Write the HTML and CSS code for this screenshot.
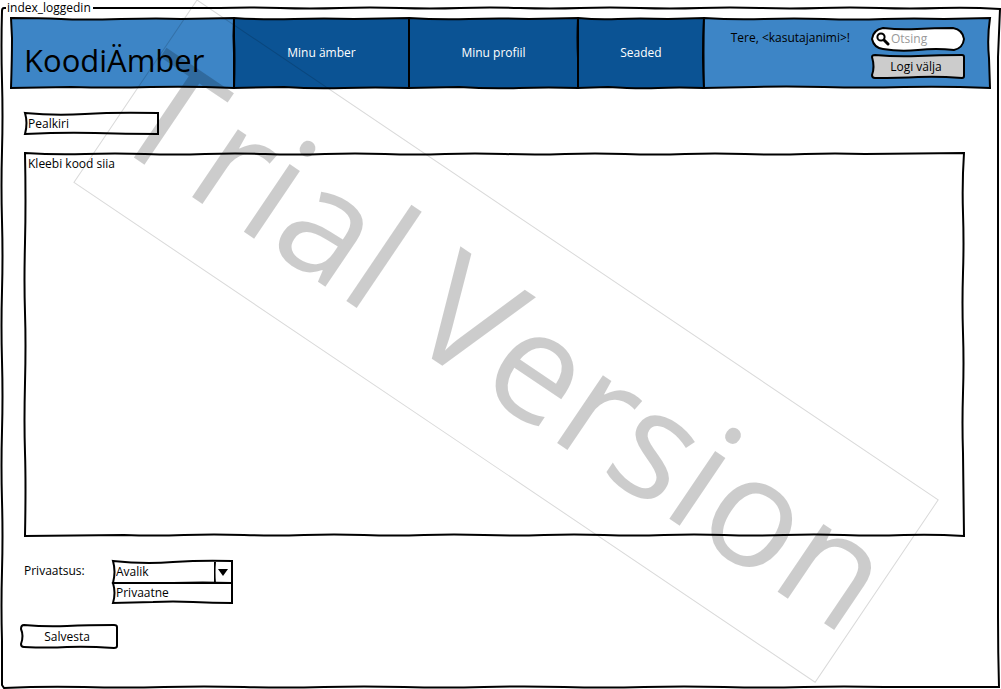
FILE: index.html
```html
<!DOCTYPE html>
<html lang="et">
<head>
<meta charset="utf-8">
<meta name="viewport" content="width=device-width, initial-scale=1">
<title>KoodiÄmber</title>
<link rel="stylesheet" href="styles.css">
</head>
<body>
<div class="frame">
  <svg class="sketch" viewBox="0 0 1001 689" preserveAspectRatio="none" aria-hidden="true"><path d="M6 8H4Q2 8 2 11q-1 35 0 70t0 70t0 70t0 70t0 70t0 70t0 70t0 70t0 70L2 685L4 688q40 -2 80 -1t80 0t80 0t80 0t80 0t80 0t80 0t80 0t80 0t80 0t80 0L999 687q-1 -35 -1 -70t0 -70t0 -70t0 -70t0 -70t0 -70t0 -70t0 -70t0 -70L1000 9q-30 -2 -60 -1t-60 0t-60 0t-60 0t-60 0t-60 0t-60 0t-60 0t-60 0t-60 0t-60 0t-60 0t-60 0L93 8"/></svg>
  <div class="frame-title">index_loggedin</div>

  <header class="header">
    <div class="cell brand">
      <svg class="sketch light" viewBox="0 0 223 70" preserveAspectRatio="none" aria-hidden="true"><path d="M0 0Q30 0 50 1T110 1T170 1L223 0Q222 18 223 35L223 70Q180 68 140 69T60 69L0 70Q1 40 1 20Z"/></svg>
      <h1 class="logo">KoodiÄmber</h1>
    </div>
    <nav class="nav">
      <a class="cell nav-link" href="#">
        <svg class="sketch dark" viewBox="0 0 175 70" preserveAspectRatio="none" aria-hidden="true"><path d="M0 0Q30 2 60 1T120 1L175 0V70Q140 69 110 70T50 69L0 70Q1 40 0 20Z"/></svg>
        <span>Minu ämber</span></a>
      <a class="cell nav-link" href="#">
        <svg class="sketch dark" viewBox="0 0 169 70" preserveAspectRatio="none" aria-hidden="true"><path d="M0 0Q30 2 60 1T120 1L169 0Q168 20 169 40V70Q140 69 110 70T50 69L0 70Z"/></svg>
        <span>Minu profiil</span></a>
      <a class="cell nav-link" href="#">
        <svg class="sketch dark" viewBox="0 0 126 70" preserveAspectRatio="none" aria-hidden="true"><path d="M0 0Q20 2 40 1T90 1L126 0Q125 20 125 40L126 70Q100 69 80 70T30 69L0 70Z"/></svg>
        <span>Seaded</span></a>
    </nav>
    <div class="cell account">
      <svg class="sketch light" viewBox="0 0 286 70" preserveAspectRatio="none" aria-hidden="true"><path d="M0 0Q30 2 60 1T120 1T180 1T240 1L286 0Q283 20 285 40L286 70Q240 68 200 69T120 69T50 69L0 70Q-1 35 0 0Z"/></svg>
      <p class="greeting">Tere, &lt;kasutajanimi&gt;!</p>
      <div class="account-tools">
        <label class="search">
          <svg class="sketch white" viewBox="0 0 92 22" preserveAspectRatio="none" aria-hidden="true"><path d="M11 0Q28 2 45 1T81 0Q91 2 92 11Q91 20 82 22Q64 20 46 22T11 21Q2 20 0 11Q1 2 11 0Z"/></svg>
          <svg class="search-icon" viewBox="0 0 14 14" aria-hidden="true"><circle cx="5" cy="5" r="3.6"/><path d="M8 8L12 12"/></svg>
          <input type="search" placeholder="Otsing" aria-label="Otsing">
        </label>
        <button class="button" type="button">
          <svg class="sketch grey" viewBox="0 0 92 23" preserveAspectRatio="none" aria-hidden="true"><path d="M3 0Q25 2 46 1T90 0Q92 0 92 2V21Q92 23 90 23Q65 21 46 22T3 23Q0 23 0 20Q3 12 0 2Q0 0 3 0Z"/></svg>
          <span>Logi välja</span></button>
      </div>
    </div>
  </header>

  <form class="editor">
    <div class="field title-field">
      <svg class="sketch white" viewBox="0 0 133 21" preserveAspectRatio="none" aria-hidden="true"><path d="M0 0Q30 3 60 1T133 0V21Q100 21 70 20T0 21Q3 10 0 0Z"/></svg>
      <input type="text" value="Pealkiri" aria-label="Pealkiri">
    </div>

    <div class="field code-field">
      <svg class="sketch white" viewBox="0 0 939 383" preserveAspectRatio="none" aria-hidden="true"><path d="M0 0q30 2 60 1t60 0t60 0t60 0t60 0t60 0t60 0t60 0t60 0t60 0t60 0t60 0t60 0t60 0L939 0Q937 30 938 60T938 120T938 180T938 240T938 300L939 383q-30 -2 -60 -1t-60 0t-60 0t-60 0t-60 0t-60 0t-60 0t-60 0t-60 0t-60 0t-60 0t-60 0t-60 0t-60 0L0 383Q1 330 0 300T0 230T0 160T0 90T0 0Z"/></svg>
      <textarea aria-label="Kood">Kleebi kood siia</textarea>
    </div>

    <div class="privacy">
      <label for="privacy">Privaatsus:</label>
      <div class="dropdown">
        <div class="field select-field">
          <svg class="sketch white" viewBox="0 0 119 21" preserveAspectRatio="none" aria-hidden="true"><path d="M0 0Q30 3 60 1T119 0V21Q90 20 60 21T0 21Q3 10 0 0Z"/></svg>
          <select id="privacy"><option>Avalik</option><option>Privaatne</option></select>
          <svg class="arrow" viewBox="0 0 18 21" aria-hidden="true"><path class="divider" d="M1 0Q0 10 1 21"/><path class="tip" d="M4 7H14L9 14Z"/></svg>
        </div>
        <div class="field option-list">
          <svg class="sketch white" viewBox="0 0 119 20" preserveAspectRatio="none" aria-hidden="true"><path d="M0 0H119V20Q100 20 80 19T40 19L0 20Q3 10 0 0Z"/></svg>
          <span>Privaatne</span>
        </div>
      </div>
    </div>

    <button class="button save" type="button">
      <svg class="sketch white" viewBox="0 0 96 23" preserveAspectRatio="none" aria-hidden="true"><path d="M3 0Q25 2 46 1T93 0Q96 0 96 2V21Q96 23 93 23Q65 21 46 22T3 22Q0 22 0 19Q3 11 0 4Q0 0 3 0Z"/></svg>
      <span>Salvesta</span></button>
  </form>

  <svg class="watermark" viewBox="0 0 1001 689">
    <g transform="translate(197 0) rotate(34)">
      <rect width="894" height="220"/>
      <text x="0" y="166">T</text>
      <text x="93" y="166">rial</text>
      <text x="356" y="166">Version</text>
    </g>
  </svg>
</div>
</body>
</html>
```
FILE: styles.css
```css
* { box-sizing: border-box; }

body {
  margin: 0;
  background: #fff;
  color: #000;
  font: 12px/16px "Open Sans", "Noto Sans", sans-serif;
}

input, textarea, select, button {
  margin: 0;
  padding: 0;
  border: 0;
  outline: 0;
  background: transparent;
  color: inherit;
  font: inherit;
  appearance: none;
}

/* Hand-drawn outlines that stretch with their box */
.sketch {
  position: absolute;
  inset: 0;
  z-index: -1;
  width: 100%;
  height: 100%;
  overflow: visible;
  fill: none;
  stroke: #000;
  stroke-width: 2;
  pointer-events: none;
}
.sketch path { vector-effect: non-scaling-stroke; }
.light { fill: #3d85c6; }
.dark { fill: #0b5394; }
.white { fill: #fff; }
.grey { fill: #ccc; }

.frame {
  position: relative;
  isolation: isolate;
  display: flex;
  flex-direction: column;
  min-height: 100vh;
  padding: 0 11px 41px;
}
.frame-title {
  height: 18px;
  margin-left: -4px;
}

.header {
  display: grid;
  grid-template-columns: 223fr 470fr 286fr;
  min-height: 70px;
}
.cell {
  position: relative;
  isolation: isolate;
  display: flex;
}
.brand { padding: 18px 0 0 13px; }
.logo {
  margin: 0;
  font-size: 31px;
  line-height: 48px;
  font-weight: 400;
}
.nav {
  display: grid;
  grid-template-columns: 175fr 169fr 126fr;
}
.nav-link {
  align-items: center;
  justify-content: center;
  color: #fff;
  text-decoration: none;
}
.account {
  justify-content: flex-end;
  gap: 22px;
  padding: 10px 26px 0 0;
}
.greeting { margin: 2px 0 0; }
.account-tools {
  display: flex;
  flex-direction: column;
  gap: 5px;
  width: 92px;
}
.search {
  position: relative;
  isolation: isolate;
  display: flex;
  align-items: center;
  gap: 1px;
  height: 22px;
  padding: 0 8px 0 4px;
}
.search-icon {
  flex: none;
  width: 14px;
  height: 14px;
  fill: none;
  stroke: #000;
  stroke-width: 2;
}
.search-icon path {
  stroke-width: 3;
  stroke-linecap: round;
}
.search input {
  width: 100%;
  min-width: 0;
}
.search input::placeholder {
  color: #999;
  opacity: 1;
}
.button {
  position: relative;
  isolation: isolate;
  height: 23px;
  padding-right: 4px;
}

.editor {
  display: flex;
  flex: 1;
  flex-direction: column;
  align-items: flex-start;
  padding: 25px 26px 0 14px;
}
.field {
  position: relative;
  isolation: isolate;
  display: flex;
  align-items: center;
  padding-left: 3px;
}
.title-field {
  width: 133px;
  height: 21px;
  margin-bottom: 19px;
}
.title-field input { width: 100%; }
.code-field {
  flex: 1;
  align-self: stretch;
  align-items: stretch;
  min-height: 120px;
  padding-top: 3px;
}
.code-field textarea {
  width: 100%;
  resize: none;
}
.privacy {
  display: flex;
  gap: 34px;
  margin-top: 25px;
}
.privacy label {
  width: 55px;
  margin: 2px 0 0 -1px;
  white-space: nowrap;
}
.dropdown { width: 119px; }
.select-field { height: 22px; }
.select-field select { flex: 1; }
.arrow {
  width: 18px;
  height: 21px;
}
.divider {
  fill: none;
  stroke: #000;
  stroke-width: 2;
}
.option-list { height: 20px; }
.save {
  width: 96px;
  margin: 22px 0 0 -4px;
}

.watermark {
  position: absolute;
  top: 0;
  left: 0;
  width: 100%;
  overflow: visible;
  pointer-events: none;
}
.watermark rect {
  fill: none;
  stroke: #000;
  stroke-opacity: 0.15;
}
.watermark text {
  fill: #000;
  fill-opacity: 0.2;
  font-size: 153px;
  font-kerning: none;
}
```
